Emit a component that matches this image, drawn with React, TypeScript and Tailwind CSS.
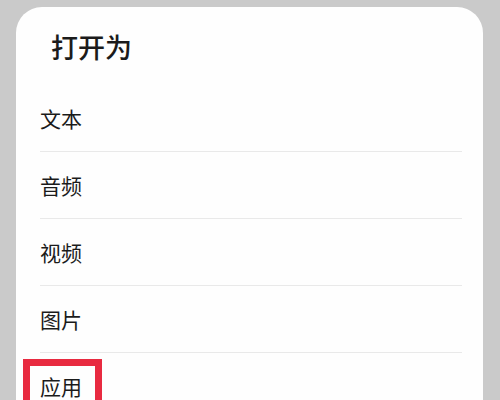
export default function App() {
  const items = ["文本", "音频", "视频", "图片", "应用"];

  return (
    <div
      className="relative w-[500px] h-[400px] overflow-hidden bg-[#cacaca] pt-[7px] pl-[16px]"
      style={{ fontFamily: '"Noto Sans CJK SC", "Noto Sans", sans-serif' }}
    >
      <div className="w-[467px] h-[420px] bg-[#fefefe] rounded-[26px]">
        <div className="h-[78px] flex items-center pl-[35px]">
          <h1 className="text-[27px] font-medium text-[#1b1b1b] leading-none">打开为</h1>
        </div>
        <div className="pl-[24px] pr-[21px]">
          {items.map((item, i) => (
            <div
              key={item}
              className={
                i < items.length - 1
                  ? "h-[67px] flex items-center border-b border-[#e9e9e9]"
                  : "h-[67px] flex items-center"
              }
            >
              <span className="text-[21px] text-[#1b1b1b] leading-none">{item}</span>
            </div>
          ))}
        </div>
      </div>

      {/* highlight box */}
      <div className="absolute left-[23px] top-[359px] w-[79px] h-[60px] border-[7px] border-[#e82a40]" />
    </div>
  );
}
